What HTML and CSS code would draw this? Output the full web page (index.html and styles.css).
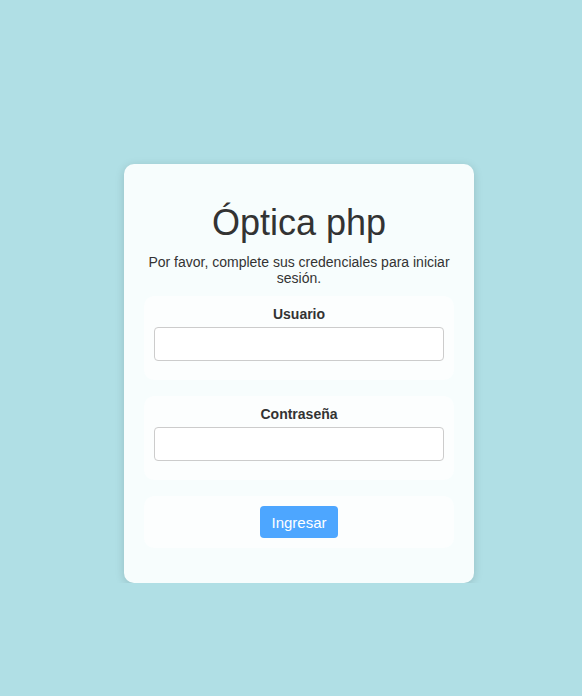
FILE: index.html
```html
<!DOCTYPE html>
<html lang="es">
<head>
  <meta charset="UTF-8">
  <meta name="viewport" content="width=device-width, initial-scale=1.0">
  <title>Óptica php - Iniciar sesión</title>
  <link rel="stylesheet" href="styles.css">
</head>
<body>
  <div class="login-card">
    <h1>Óptica php</h1>
    <p class="login-hint">Por favor, complete sus credenciales para iniciar sesión.</p>

    <form class="login-form" action="#" method="post">
      <div class="form-group">
        <label for="usuario">Usuario</label>
        <input type="text" id="usuario" name="usuario">
      </div>
      <div class="form-group">
        <label for="clave">Contraseña</label>
        <input type="password" id="clave" name="clave">
      </div>
      <div class="form-group form-actions">
        <button type="submit" class="btn-login">Ingresar</button>
      </div>
    </form>
  </div>
</body>
</html>
```

FILE: styles.css
```css
* {
  box-sizing: border-box;
}

body {
  margin: 0;
  padding-left: 16px;
  font-family: 'Liberation Sans', Arial, sans-serif;
  background: #b0dfe5;
  color: #333;
}

.login-card {
  width: 350px;
  margin: 164px auto 0;
  padding: 20px 20px 19px;
  background: #f7fdfd;
  border-radius: 10px;
  box-shadow: 0 2px 10px rgba(0, 0, 0, 0.15);
  text-align: center;
}

.login-card h1 {
  font-size: 36px;
  font-weight: 400;
  margin: 18px 0 10px;
  color: #333;
}

.login-hint {
  font-size: 14px;
  margin: 0 0 10px;
}

.form-group {
  background: #fcfefe;
  border-radius: 10px;
  padding: 10px 10px 19px;
  margin-bottom: 16px;
}

.form-group label {
  display: block;
  font-size: 14px;
  font-weight: 700;
  margin-bottom: 5px;
}

.form-group input {
  display: block;
  width: 100%;
  height: 34px;
  padding: 6px 10px;
  font-family: inherit;
  font-size: 14px;
  background: #fff;
  border: 1px solid #ccc;
  border-radius: 4px;
}

.form-actions {
  padding: 10px;
}

.btn-login {
  height: 32px;
  padding: 0 11px;
  font-family: inherit;
  font-size: 15px;
  color: #fff;
  background: #4da6ff;
  border: none;
  border-radius: 4px;
  cursor: pointer;
}
```
